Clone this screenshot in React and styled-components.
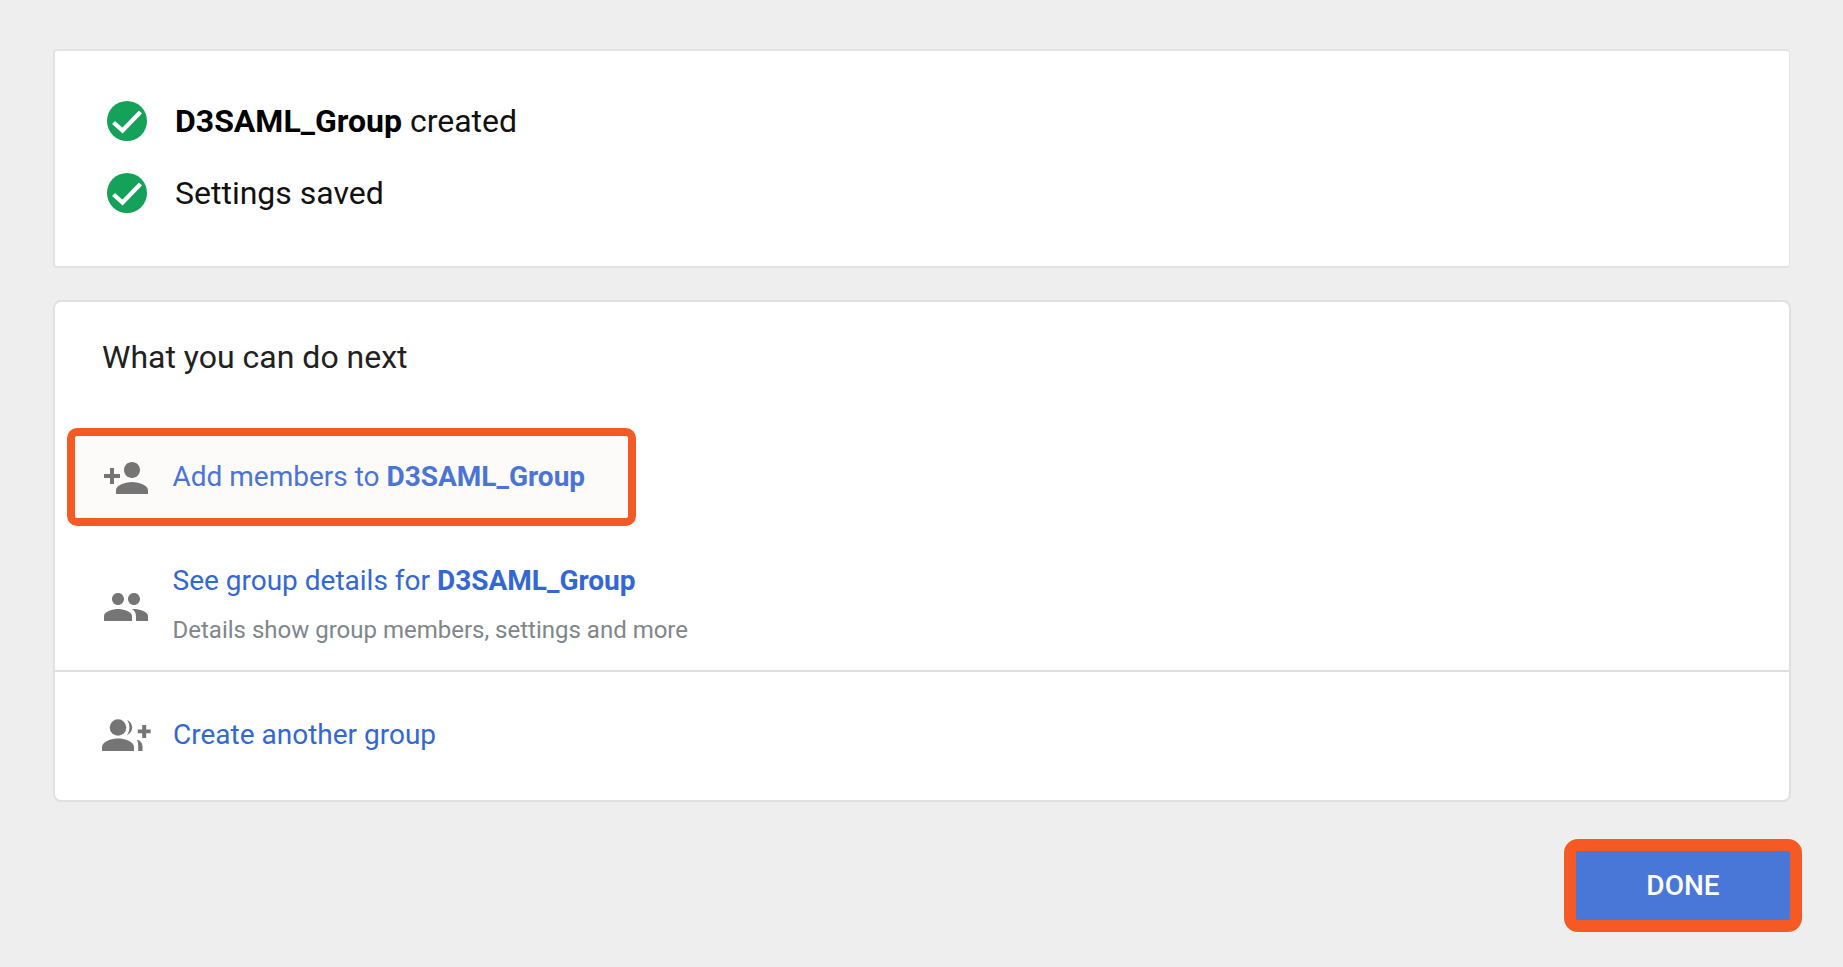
import React from 'react'
import styled, { createGlobalStyle } from 'styled-components'

const GlobalStyle = createGlobalStyle`
    html, body {
        margin: 0;
        padding: 0;
        background: #eeeeee;
        font-family: Roboto, "Liberation Sans", sans-serif;
    }
`

const CheckIcon = () => (
    <StatusSvg viewBox="0 0 40 40">
        <circle cx="20" cy="20" r="20" fill="#14a15a" />
        <path d="M6.5 21.500L15.500 29.500L33.500 11" fill="none" stroke="#fff" strokeWidth="4.2" />
    </StatusSvg>
)

const AddPersonIcon = () => (
    <ActionSvg viewBox="0 0 24 24" $drop={4}>
        <path d="M15 12c2.21 0 4-1.79 4-4s-1.79-4-4-4-4 1.79-4 4 1.79 4 4 4zm-9-2V7H4v3H1v2h3v3h2v-3h3v-2H6zm9 4c-2.67 0-8 1.34-8 4v2h16v-2c0-2.66-5.33-4-8-4z" />
    </ActionSvg>
)

const GroupIcon = () => (
    <ActionSvg viewBox="0 0 24 24" $drop={6}>
        <path d="M16 11c1.66 0 2.99-1.34 2.99-3S17.66 5 16 5c-1.66 0-3 1.34-3 3s1.34 3 3 3zm-8 0c1.66 0 2.99-1.34 2.99-3S9.66 5 8 5C6.34 5 5 6.34 5 8s1.34 3 3 3zm0 2c-2.33 0-7 1.17-7 3.5V19h14v-2.5c0-2.33-4.67-3.5-7-3.5zm8 0c-.29 0-.62.02-.97.05 1.16.84 1.97 1.97 1.97 3.45V19h6v-2.5c0-2.33-4.67-3.5-7-3.5z" />
    </ActionSvg>
)

const GroupAddIcon = () => (
    <NewGroupSvg viewBox="0 0 50 34">
        <circle cx="16" cy="8.500" r="8.300" />
        <path d="M0 32v-4c0-6 10.500-8.500 16-8.500s16 2.500 16 8.500v4z" />
        <path d="M25 .8c3.200 1.700 5.200 4.500 5.200 7.700s-2 6-5.200 7.700c1.600-2.200 2.400-4.800 2.400-7.700S26.600 3 25 .8z" />
        <path d="M35 20.500c3.300 1 5.500 3.700 5.500 7V32h-4.300v-4.500c0-2.800-.3-5-1.200-7z" />
        <path d="M40.200 6h4v4.500h4.500v3.800h-4.500v4.700h-4v-4.700h-4.500v-3.800h4.500z" />
    </NewGroupSvg>
)

const App = () => {
    return (
        <Page>
            <GlobalStyle />
            <StatusCard>
                <StatusRow>
                    <CheckIcon />
                    <StatusText><strong>D3SAML_Group</strong> created</StatusText>
                </StatusRow>
                <StatusRow>
                    <CheckIcon />
                    <StatusText>Settings saved</StatusText>
                </StatusRow>
            </StatusCard>

            <NextCard>
                <NextTitle>What you can do next</NextTitle>
                <HighlightRow>
                    <AddPersonIcon />
                    <ActionLink $light>Add members to <strong>D3SAML_Group</strong></ActionLink>
                </HighlightRow>
                <DetailsRow>
                    <GroupIcon />
                    <DetailsText>
                        <ActionLink>See group details for <strong>D3SAML_Group</strong></ActionLink>
                        <Hint>Details show group members, settings and more</Hint>
                    </DetailsText>
                </DetailsRow>
                <CreateRow>
                    <GroupAddIcon />
                    <ActionLink>Create another group</ActionLink>
                </CreateRow>
            </NextCard>

            <Footer>
                <DoneButton>DONE</DoneButton>
            </Footer>
        </Page>
    )
}

export default App

const Page = styled.div`
    box-sizing: border-box;
    height: 967px;
    padding: 49px 52px 0 53px;
    overflow: hidden;
`
const StatusCard = styled.section`
    box-sizing: border-box;
    height: 219px;
    margin-right: 1px;
    background: #fff;
    border: 1px solid #e3e3e6;
    border-width: 2px 1px 2px 2px;
    border-radius: 4px;
    padding: 50px 0 0 52px;
    display: flex;
    flex-direction: column;
    gap: 32px;
`
const StatusRow = styled.div`
    display: flex;
    align-items: center;
    gap: 28px;
    height: 40px;
`
const StatusSvg = styled.svg`
    width: 40px;
    height: 40px;
    flex: none;
`
const StatusText = styled.span`
    font-size: 32px;
    color: #111;

    strong {
        font-weight: 700;
        color: #000;
    }
`
const NextCard = styled.section`
    box-sizing: border-box;
    height: 502px;
    margin-top: 32px;
    background: #fff;
    border: 2px solid #e0e0e3;
    border-radius: 8px;
    display: flex;
    flex-direction: column;
`
const NextTitle = styled.h2`
    box-sizing: border-box;
    height: 126px;
    margin: 0;
    padding: 35px 0 0 47px;
    font-size: 32px;
    line-height: 40px;
    font-weight: 400;
    color: #212121;
`
const HighlightRow = styled.div`
    box-sizing: border-box;
    width: 569px;
    height: 98px;
    margin-left: 12px;
    padding: 0 0 2px 27px;
    background: #fdfbfa;
    border: 8px solid #f55a24;
    border-radius: 10px;
    display: flex;
    align-items: center;
    gap: 22.5px;
`
const DetailsRow = styled.div`
    box-sizing: border-box;
    height: 146px;
    padding: 12px 0 0 47px;
    display: flex;
    align-items: center;
    gap: 22.5px;
    border-bottom: 2px solid #e0e0e3;
`
const CreateRow = styled.div`
    flex: 1;
    padding: 0 0 0 47px;
    display: flex;
    align-items: center;
    gap: 21px;

    a {
        margin-bottom: 4px;
    }
`
const ActionSvg = styled.svg`
    width: 48px;
    height: 48px;
    flex: none;
    fill: #757575;
    margin-top: ${(props) => props.$drop || 0}px;
`
const NewGroupSvg = styled.svg`
    width: 50px;
    height: 34px;
    flex: none;
    fill: #757575;
`
const DetailsText = styled.div`
    display: flex;
    flex-direction: column;
    gap: 19px;
`
const ActionLink = styled.a`
    font-size: 28px;
    line-height: 33px;
    color: ${(props) => (props.$light ? '#4a74d8' : '#3367d6')};

    strong {
        font-weight: 700;
    }
`
const Hint = styled.div`
    font-size: 24px;
    line-height: 28px;
    color: #80868b;
`
const Footer = styled.div`
    display: flex;
    justify-content: flex-end;
    margin: 37px -11px 0 0;
`
const DoneButton = styled.button`
    box-sizing: border-box;
    width: 238px;
    height: 93px;
    background: #4877d8;
    border: 12px solid #f55a24;
    border-radius: 14px;
    color: #fff;
    font-family: Roboto, sans-serif;
    font-size: 28px;
    font-weight: 500;
    padding: 0;
`
